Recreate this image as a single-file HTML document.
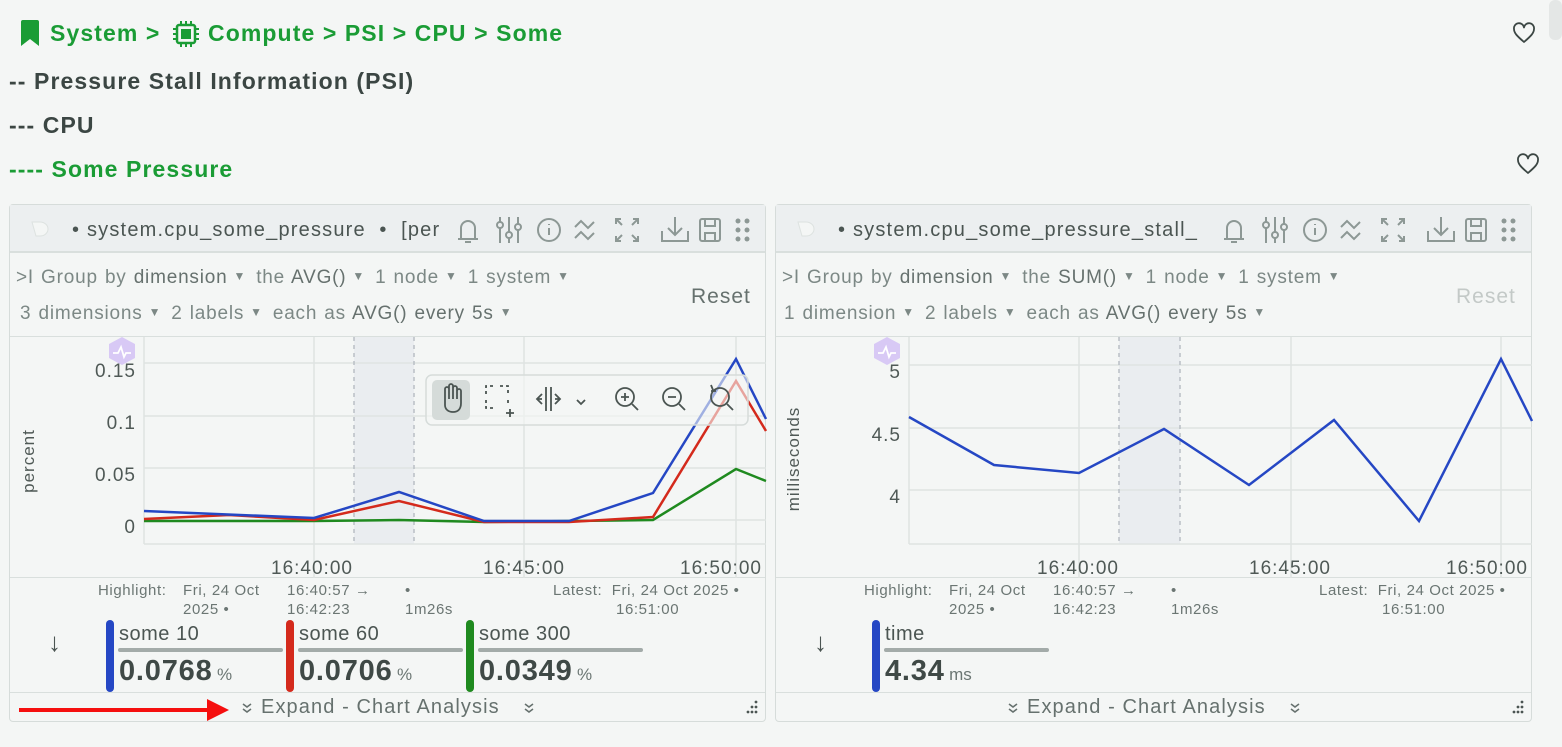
<!DOCTYPE html>
<html><head><meta charset="utf-8"><style>
*{box-sizing:border-box;margin:0;padding:0}
body{width:1562px;height:746px;background:#f4f6f5;font-family:"Liberation Sans",sans-serif;position:relative;overflow:hidden;color:#555f5c}
.a{position:absolute;white-space:nowrap}
.g{color:#1a9c35;font-weight:bold;font-size:23px;letter-spacing:1.1px}
.h{color:#3b4643;font-weight:bold;font-size:23px;letter-spacing:1.1px}
.panel{position:absolute;top:204px;width:757px;height:518px;border:1px solid #d6dcda;border-radius:4px;background:#f4f6f5}
.hdr{position:absolute;left:0;top:0;right:0;height:48px;background:#eceff0;border-bottom:2px solid #d9dfdd}
.t{font-size:20px;color:#4b5552;letter-spacing:1.2px}
.c{font-size:19px;color:#7c8885;letter-spacing:0.8px;word-spacing:1px}
.c b{font-weight:normal;color:#66716e}
.dd{font-size:12px;margin:0 10px 0 6px;position:relative;top:-3px}
.sep{position:absolute;left:0;right:0;height:1px;background:#d9dfdd}
.sm{font-size:15px;color:#6b7673;line-height:19px;letter-spacing:0.6px}
.bar{position:absolute;width:8px;border-radius:4px}
.ln{position:absolute;height:4px;background:#a3aba9;border-radius:2px}
.lbl{font-size:20px;color:#4b5552;letter-spacing:0.5px}
.val{font-size:29px;font-weight:bold;color:#3f4946;letter-spacing:0.8px}
.unit{font-size:17px;color:#6b7673}
.ax{font-size:19px;fill:#4f5956;font-family:"Liberation Sans",sans-serif;letter-spacing:1px}
.ex{font-size:20px;color:#66716e;letter-spacing:1.1px}
</style></head><body>

<svg class="a" style="left:20px;top:20px" width="20" height="26"><path d="M1 2a2 2 0 0 1 2-2h14a2 2 0 0 1 2 2v24l-9-7-9 7z" fill="#1a9c35"/></svg>
<div class="a g" style="left:50px;top:20px">System &gt;</div>
<svg class="a" style="left:172px;top:20px" width="28" height="28" viewBox="0 0 28 28"><rect x="5" y="5" width="18" height="18" rx="2" fill="none" stroke="#1a9c35" stroke-width="2.5"/><rect x="9" y="9" width="10" height="10" fill="#1a9c35"/><g stroke="#1a9c35" stroke-width="2"><path d="M9 1v4M14 1v4M19 1v4M9 23v4M14 23v4M19 23v4M1 9h4M1 14h4M1 19h4M23 9h4M23 14h4M23 19h4"/></g></svg>
<div class="a g" style="left:208px;top:20px">Compute &gt; PSI &gt; CPU &gt; Some</div>
<div class="a h" style="left:9px;top:68px">-- Pressure Stall Information (PSI)</div>
<div class="a h" style="left:9px;top:112px">--- CPU</div>
<div class="a g" style="left:9px;top:156px">---- Some Pressure</div>
<svg class="a" style="left:1512px;top:22px" width="24" height="22" viewBox="0 0 24 22"><path d="M12 20C5 14 2 11 2 7a5 5 0 0 1 10-1.5A5 5 0 0 1 22 7c0 4-3 7-10 13z" fill="none" stroke="#3b4643" stroke-width="1.8" stroke-linejoin="round"/></svg>
<svg class="a" style="left:1516px;top:153px" width="24" height="22" viewBox="0 0 24 22"><path d="M12 20C5 14 2 11 2 7a5 5 0 0 1 10-1.5A5 5 0 0 1 22 7c0 4-3 7-10 13z" fill="none" stroke="#3b4643" stroke-width="1.8" stroke-linejoin="round"/></svg>
<div class="a" style="left:1549px;top:0;width:13px;height:40px;background:#e4e7e6;border-radius:6px"></div>

<!-- LEFT PANEL -->
<div class="panel" style="left:9px">
 <div class="hdr"></div>
 <svg class="a" style="left:20px;top:15px" width="22" height="18"><path d="M2 2h8a8 7 0 0 1 0 14H6z" fill="#f4f6f5" stroke="#dde2e0"/></svg>
 <div class="a t" style="left:62px;top:14px">• system.cpu_some_pressure &nbsp;• &nbsp;[per</div>
 <svg class="a" style="left:442px;top:8px" width="300" height="34" viewBox="0 0 300 34" fill="none" stroke="#8d9895" stroke-width="2">
  <path d="M6 26h20M9 26V15a7 7 0 0 1 14 0v11M13 29h6"/>
  <path d="M48 4v26M57 4v26M66 4v26"/><circle cx="48" cy="12" r="3" fill="#eceff0"/><circle cx="57" cy="22" r="3" fill="#eceff0"/><circle cx="66" cy="14" r="3" fill="#eceff0"/>
  <circle cx="97" cy="17" r="11"/><path d="M97 15v7M97 11v1"/>
  <path d="M123 14l6-6 7 7 6-6M123 25l6-6 7 7 6-6"/>
  <path d="M164 11V6h5M181 6h5v5M164 23v5h5M186 23v5h-5M165 7l5 5M185 7l-5 5M165 27l5-5M185 27l-5-5"/>
  <path d="M210 18v10h26V18M223 4v18M216 15l7 7 7-7"/>
  <rect x="248" y="6" width="20" height="22" rx="2"/><path d="M253 6v7h10V6M253 28v-8h10v8"/>
  <g fill="#8d9895" stroke="none"><circle cx="286" cy="8" r="2.5"/><circle cx="295" cy="8" r="2.5"/><circle cx="286" cy="17" r="2.5"/><circle cx="295" cy="17" r="2.5"/><circle cx="286" cy="26" r="2.5"/><circle cx="295" cy="26" r="2.5"/></g>
 </svg>
 <div class="a c" style="left:6px;top:62px">&gt;I Group by <b>dimension</b><span class="dd">▼</span>the <b>AVG()</b><span class="dd">▼</span>1 node<span class="dd">▼</span>1 system<span class="dd">▼</span></div>
 <div class="a c" style="left:10px;top:98px">3 dimensions<span class="dd">▼</span>2 labels<span class="dd">▼</span>each as <b>AVG()</b> <b>every 5s</b><span class="dd">▼</span></div>
 <div class="a" style="left:681px;top:80px;font-size:21px;color:#66716e;letter-spacing:1px">Reset</div>
 <div class="sep" style="top:131px"></div>
 <div class="sep" style="top:372px"></div>
 <div class="sep" style="top:487px"></div>
 <svg class="a" style="left:-9px;top:-204px" width="770" height="746">
  <rect x="353" y="336" width="60" height="207" fill="#eaedf0"/>
  <g stroke="#dfe3e2" stroke-width="1.5"><path d="M143 362H765M143 415H765M143 467H765M143 519H765M313 336V577M523 336V577M735 336V577"/></g>
  <path d="M143 543H765M143 336V543" stroke="#dfe3e2" stroke-width="1.5"/>
  <path d="M353 336V543M413 336V543" stroke="#b9bfc5" stroke-width="1.5" stroke-dasharray="4 4"/>
  <path d="M108 343l13-7 13 7v14l-13 7-13-7z" fill="#d8c9f5"/><path d="M112 352h5l3-6 3 10 2-4h5" stroke="#fff" stroke-width="1.8" fill="none"/>
  <polyline points="143,520 313,520 398,519 483,521 652,519 735,468 765,480" fill="none" stroke="#1f8a1f" stroke-width="2.5"/>
  <polyline points="143,518 228,514 313,519 398,500 483,521 568,521 652,516 735,380 765,430" fill="none" stroke="#d42a1c" stroke-width="2.5"/>
  <polyline points="143,510 313,517 398,491 483,520 568,520 652,492 735,358 765,418" fill="none" stroke="#2547c4" stroke-width="2.5"/>
  <text class="ax" x="135" y="376" text-anchor="end">0.15</text>
  <text class="ax" x="135" y="428" text-anchor="end">0.1</text>
  <text class="ax" x="135" y="480" text-anchor="end">0.05</text>
  <text class="ax" x="135" y="532" text-anchor="end">0</text>
  <text class="ax" x="33" y="460" transform="rotate(-90 33 460)" text-anchor="middle" style="font-size:17px">percent</text>
  <text class="ax" x="311" y="573" text-anchor="middle">16:40:00</text>
  <text class="ax" x="523" y="573" text-anchor="middle">16:45:00</text>
  <text class="ax" x="720" y="573" text-anchor="middle">16:50:00</text>
  <rect x="425" y="374" width="322" height="50" rx="6" fill="rgba(244,246,245,0.6)" stroke="#d6dcda" stroke-width="1.5"/>
  <rect x="431" y="379" width="38" height="40" rx="5" fill="#d5dbd9"/>
  <g fill="none" stroke="#4b5552" stroke-width="1.8">
   <path d="M444 404v-16a2 2 0 0 1 4 0v10-13a2 2 0 0 1 4 0v13-11a2 2 0 0 1 4 0v11-8a2 2 0 0 1 4 0v12c0 6-3 9-8 9s-8-3-8-7"/>
   <path d="M485 393v-8h8M499 385h8v8M485 399v8h8M507 399v4" stroke-dasharray="3 3"/><path d="M505 412h8M509 408v8"/>
   <path d="M545 386v24M550 386v24M541 393l-5 5 5 5M536 398h5M554 393l5 5-5 5M559 398h-5M576 399l4 4 4-4"/>
   <circle cx="624" cy="396" r="9"/><path d="M631 403l6 6M620 396h8M624 392v8"/>
   <circle cx="671" cy="396" r="9"/><path d="M678 403l6 6M667 396h8"/>
   <circle cx="719" cy="396" r="9"/><path d="M726 403l6 6M712 389l-2-5M710 390h5"/>
  </g>
 </svg>
 <div class="a sm" style="left:88px;top:376px;text-align:right">Highlight:</div>
 <div class="a sm" style="left:173px;top:376px">Fri, 24 Oct<br>2025 •</div>
 <div class="a sm" style="left:277px;top:376px">16:40:57 →<br>16:42:23</div>
 <div class="a sm" style="left:395px;top:376px">•<br>1m26s</div>
 <div class="a sm" style="left:543px;top:376px">Latest:&nbsp; Fri, 24 Oct 2025 •<br><span style="padding-left:63px">16:51:00</span></div>
 <div class="a" style="left:38px;top:422px;font-size:26px;color:#4b5552">↓</div>
 <div class="bar" style="left:96px;top:415px;height:72px;background:#2547c4"></div>
 <div class="a lbl" style="left:109px;top:418px">some 10</div><div class="ln" style="left:108px;top:443px;width:165px"></div>
 <div class="a" style="left:109px;top:450px"><span class="val">0.0768</span> <span class="unit">%</span></div>
 <div class="bar" style="left:276px;top:415px;height:72px;background:#d42a1c"></div>
 <div class="a lbl" style="left:289px;top:418px">some 60</div><div class="ln" style="left:288px;top:443px;width:165px"></div>
 <div class="a" style="left:289px;top:450px"><span class="val">0.0706</span> <span class="unit">%</span></div>
 <div class="bar" style="left:456px;top:415px;height:72px;background:#1f8a1f"></div>
 <div class="a lbl" style="left:469px;top:418px">some 300</div><div class="ln" style="left:468px;top:443px;width:165px"></div>
 <div class="a" style="left:469px;top:450px"><span class="val">0.0349</span> <span class="unit">%</span></div>
 <svg class="a" style="left:9px;top:493px" width="210" height="24"><path d="M0 12H190" stroke="#f50f0f" stroke-width="4"/><path d="M188 1l22 11-22 11z" fill="#f50f0f"/></svg>
 <svg class="a" style="left:231px;top:497px" width="12" height="12" fill="none" stroke="#66716e" stroke-width="1.6"><path d="M2 2l4 3 4-3M2 7l4 3 4-3"/></svg>
 <div class="a ex" style="left:251px;top:491px">Expand - Chart Analysis</div>
 <svg class="a" style="left:513px;top:497px" width="12" height="12" fill="none" stroke="#66716e" stroke-width="1.6"><path d="M2 2l4 3 4-3M2 7l4 3 4-3"/></svg>
 <svg class="a" style="left:730px;top:493px" width="20" height="20" fill="#4b5552"><circle cx="16" cy="4" r="1.4"/><circle cx="12" cy="9" r="1.4"/><circle cx="16" cy="9" r="1.4"/><circle cx="8" cy="14" r="1.4"/><circle cx="12" cy="14" r="1.4"/><circle cx="16" cy="14" r="1.4"/></svg>
</div>

<!-- RIGHT PANEL -->
<div class="panel" style="left:775px">
 <div class="hdr"></div>
 <svg class="a" style="left:20px;top:15px" width="22" height="18"><path d="M2 2h8a8 7 0 0 1 0 14H6z" fill="#f4f6f5" stroke="#dde2e0"/></svg>
 <div class="a t" style="left:62px;top:14px">• system.cpu_some_pressure_stall_</div>
 <svg class="a" style="left:442px;top:8px" width="300" height="34" viewBox="0 0 300 34" fill="none" stroke="#8d9895" stroke-width="2">
  <path d="M6 26h20M9 26V15a7 7 0 0 1 14 0v11M13 29h6"/>
  <path d="M48 4v26M57 4v26M66 4v26"/><circle cx="48" cy="12" r="3" fill="#eceff0"/><circle cx="57" cy="22" r="3" fill="#eceff0"/><circle cx="66" cy="14" r="3" fill="#eceff0"/>
  <circle cx="97" cy="17" r="11"/><path d="M97 15v7M97 11v1"/>
  <path d="M123 14l6-6 7 7 6-6M123 25l6-6 7 7 6-6"/>
  <path d="M164 11V6h5M181 6h5v5M164 23v5h5M186 23v5h-5M165 7l5 5M185 7l-5 5M165 27l5-5M185 27l-5-5"/>
  <path d="M210 18v10h26V18M223 4v18M216 15l7 7 7-7"/>
  <rect x="248" y="6" width="20" height="22" rx="2"/><path d="M253 6v7h10V6M253 28v-8h10v8"/>
  <g fill="#8d9895" stroke="none"><circle cx="286" cy="8" r="2.5"/><circle cx="295" cy="8" r="2.5"/><circle cx="286" cy="17" r="2.5"/><circle cx="295" cy="17" r="2.5"/><circle cx="286" cy="26" r="2.5"/><circle cx="295" cy="26" r="2.5"/></g>
 </svg>
 <div class="a c" style="left:6px;top:62px">&gt;I Group by <b>dimension</b><span class="dd">▼</span>the <b>SUM()</b><span class="dd">▼</span>1 node<span class="dd">▼</span>1 system<span class="dd">▼</span></div>
 <div class="a c" style="left:8px;top:98px">1 dimension<span class="dd">▼</span>2 labels<span class="dd">▼</span>each as <b>AVG()</b> <b>every 5s</b><span class="dd">▼</span></div>
 <div class="a" style="left:680px;top:80px;font-size:21px;color:#c3c9c7;letter-spacing:1px">Reset</div>
 <div class="sep" style="top:131px"></div>
 <div class="sep" style="top:372px"></div>
 <div class="sep" style="top:487px"></div>
 <svg class="a" style="left:-775px;top:-204px" width="1540" height="746">
  <rect x="1118" y="336" width="61" height="207" fill="#eaedf0"/>
  <g stroke="#dfe3e2" stroke-width="1.5"><path d="M908 364H1531M908 427H1531M908 489H1531M1078 336V577M1290 336V577M1500 336V577"/></g>
  <path d="M908 543H1531M908 336V543" stroke="#dfe3e2" stroke-width="1.5"/>
  <path d="M1118 336V543M1179 336V543" stroke="#b9bfc5" stroke-width="1.5" stroke-dasharray="4 4"/>
  <path d="M873 343l13-7 13 7v14l-13 7-13-7z" fill="#d8c9f5"/><path d="M877 352h5l3-6 3 10 2-4h5" stroke="#fff" stroke-width="1.8" fill="none"/>
  <polyline points="908,416 993,464 1078,472 1163,428 1248,484 1333,419 1418,520 1500,358 1531,420" fill="none" stroke="#2547c4" stroke-width="2.5"/>
  <text class="ax" x="900" y="377" text-anchor="end">5</text>
  <text class="ax" x="900" y="440" text-anchor="end">4.5</text>
  <text class="ax" x="900" y="502" text-anchor="end">4</text>
  <text class="ax" x="798" y="458" transform="rotate(-90 798 458)" text-anchor="middle" style="font-size:17px">milliseconds</text>
  <text class="ax" x="1077" y="573" text-anchor="middle">16:40:00</text>
  <text class="ax" x="1289" y="573" text-anchor="middle">16:45:00</text>
  <text class="ax" x="1486" y="573" text-anchor="middle">16:50:00</text>
 </svg>
 <div class="a sm" style="left:88px;top:376px">Highlight:</div>
 <div class="a sm" style="left:173px;top:376px">Fri, 24 Oct<br>2025 •</div>
 <div class="a sm" style="left:277px;top:376px">16:40:57 →<br>16:42:23</div>
 <div class="a sm" style="left:395px;top:376px">•<br>1m26s</div>
 <div class="a sm" style="left:543px;top:376px">Latest:&nbsp; Fri, 24 Oct 2025 •<br><span style="padding-left:63px">16:51:00</span></div>
 <div class="a" style="left:38px;top:422px;font-size:26px;color:#4b5552">↓</div>
 <div class="bar" style="left:96px;top:415px;height:72px;background:#2547c4"></div>
 <div class="a lbl" style="left:109px;top:418px">time</div><div class="ln" style="left:108px;top:443px;width:165px"></div>
 <div class="a" style="left:109px;top:450px"><span class="val">4.34</span> <span class="unit">ms</span></div>
 <svg class="a" style="left:231px;top:497px" width="12" height="12" fill="none" stroke="#66716e" stroke-width="1.6"><path d="M2 2l4 3 4-3M2 7l4 3 4-3"/></svg>
 <div class="a ex" style="left:251px;top:491px">Expand - Chart Analysis</div>
 <svg class="a" style="left:513px;top:497px" width="12" height="12" fill="none" stroke="#66716e" stroke-width="1.6"><path d="M2 2l4 3 4-3M2 7l4 3 4-3"/></svg>
 <svg class="a" style="left:730px;top:493px" width="20" height="20" fill="#4b5552"><circle cx="16" cy="4" r="1.4"/><circle cx="12" cy="9" r="1.4"/><circle cx="16" cy="9" r="1.4"/><circle cx="8" cy="14" r="1.4"/><circle cx="12" cy="14" r="1.4"/><circle cx="16" cy="14" r="1.4"/></svg>
</div>
</body></html>
